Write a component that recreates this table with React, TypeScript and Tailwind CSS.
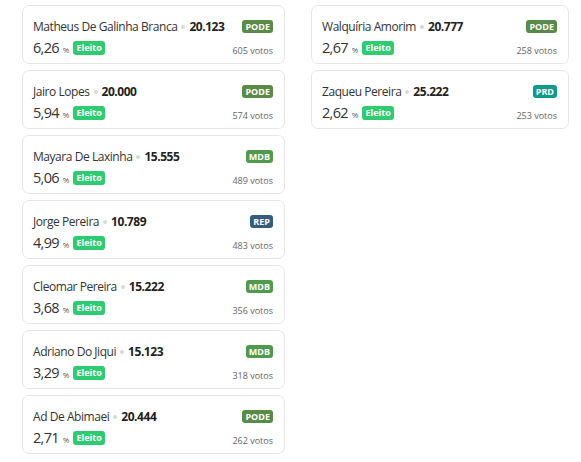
type Candidato = {
  nome: string;
  numero: string;
  partido: string;
  percentual: string;
  votos: number;
};

const esquerda: Candidato[] = [
  { nome: 'Matheus De Galinha Branca', numero: '20.123', partido: 'PODE', percentual: '6,26', votos: 605 },
  { nome: 'Jairo Lopes', numero: '20.000', partido: 'PODE', percentual: '5,94', votos: 574 },
  { nome: 'Mayara De Laxinha', numero: '15.555', partido: 'MDB', percentual: '5,06', votos: 489 },
  { nome: 'Jorge Pereira', numero: '10.789', partido: 'REP', percentual: '4,99', votos: 483 },
  { nome: 'Cleomar Pereira', numero: '15.222', partido: 'MDB', percentual: '3,68', votos: 356 },
  { nome: 'Adriano Do Jiqui', numero: '15.123', partido: 'MDB', percentual: '3,29', votos: 318 },
  { nome: 'Ad De Abimaei', numero: '20.444', partido: 'PODE', percentual: '2,71', votos: 262 },
];

const direita: Candidato[] = [
  { nome: 'Walquíria Amorim', numero: '20.777', partido: 'PODE', percentual: '2,67', votos: 258 },
  { nome: 'Zaqueu Pereira', numero: '25.222', partido: 'PRD', percentual: '2,62', votos: 253 },
];

const partidoCor: Record<string, string> = {
  PODE: 'bg-[#5a8a48]',
  MDB: 'bg-[#4f9a4c]',
  REP: 'bg-[#355c7d]',
  PRD: 'bg-[#0f9b8a]',
};

const CardCandidato: React.FC<{ c: Candidato }> = ({ c }) => (
  <div className="h-[59px] rounded-[7px] border border-[#e6e6e6] bg-white pl-[10px] pr-[11px] pt-[10px]">
    <div className="flex h-[21px] items-center justify-between">
      <div className="flex items-center whitespace-nowrap text-[12px] tracking-[-0.45px] text-[#333]">
        <span>{c.nome}</span>
        <span className="mx-[4px] inline-block h-[4px] w-[4px] rounded-full bg-[#d8d8d8]" />
        <span className="font-bold text-[#222]">{c.numero}</span>
      </div>
      <span className={`${partidoCor[c.partido]} rounded-[3px] px-[3px] text-[9px] font-bold leading-[13px] text-white`}>
        {c.partido}
      </span>
    </div>
    <div className="mt-[1px] flex items-end justify-between">
      <div className="flex items-center">
        <span className="text-[14.5px] leading-[20px] tracking-[-0.7px] text-[#333]">{c.percentual}</span>
        <span className="ml-[4px] mt-[4px] text-[8px] text-[#555]">%</span>
        <span className="ml-[4px] rounded-[3px] bg-[#2ecc71] px-[3px] text-[9px] font-bold leading-[14px] text-white">
          Eleito
        </span>
      </div>
      <span className="text-[9px] leading-[14px] text-[#666]">{c.votos} votos</span>
    </div>
  </div>
);

export default function App() {
  return (
    <div className="min-h-[462px] bg-white pl-[22px] pt-[5px] font-['Open_Sans',sans-serif]">
      <div className="flex gap-[26px]">
        <div className="flex w-[263px] flex-col gap-[6px]">
          {esquerda.map((c) => (
            <CardCandidato key={c.nome} c={c} />
          ))}
        </div>
        <div className="flex w-[258px] flex-col gap-[6px]">
          {direita.map((c) => (
            <CardCandidato key={c.nome} c={c} />
          ))}
        </div>
      </div>
    </div>
  );
}
